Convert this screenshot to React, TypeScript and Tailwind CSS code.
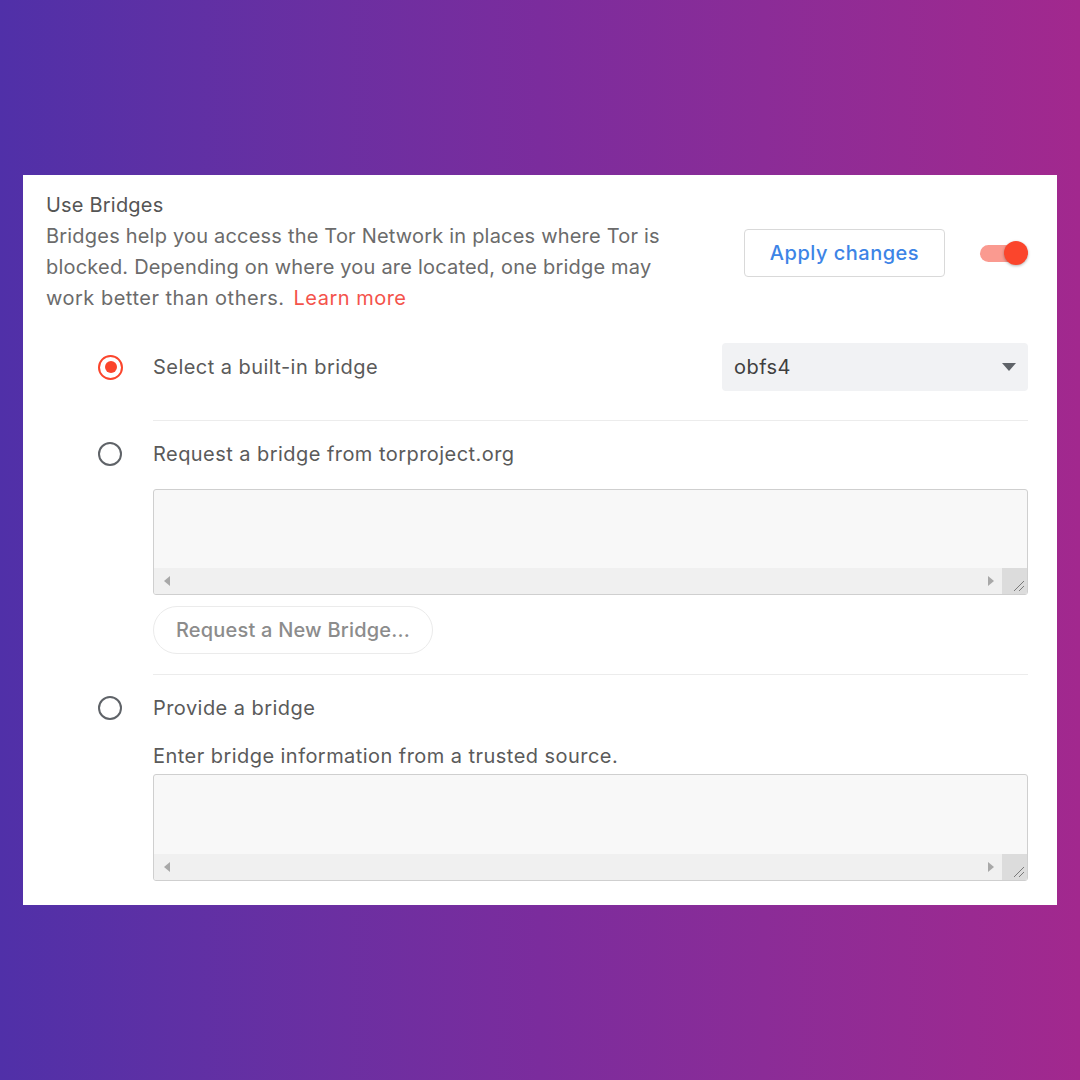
import React from "react";

function Radio({ checked }: { checked?: boolean }) {
  return checked ? (
    <div className="w-[25px] h-[25px] rounded-full border-[2.5px] border-[#fb452c] flex items-center justify-center">
      <div className="w-[12px] h-[12px] rounded-full bg-[#fb452c]" />
    </div>
  ) : (
    <div className="w-[24px] h-[24px] rounded-full border-[2.5px] border-[#5f6368]" />
  );
}

function FakeTextarea({ h }: { h: string }) {
  return (
    <div className={`${h} w-full rounded-[3px] border border-[#cfcfcf] bg-[#f8f8f8] flex flex-col overflow-hidden`}>
      <div className="flex-1" />
      <div className="h-[26px] bg-[#f0f0f0] flex items-center">
        <div className="w-[26px] flex items-center justify-center">
          <svg width="6" height="10" viewBox="0 0 6 10">
            <path d="M6 0 L0 5 L6 10 Z" fill="#a8a8a8" />
          </svg>
        </div>
        <div className="flex-1" />
        <div className="w-[22px] flex items-center justify-center">
          <svg width="6" height="10" viewBox="0 0 6 10">
            <path d="M0 0 L6 5 L0 10 Z" fill="#a8a8a8" />
          </svg>
        </div>
        <div className="w-[25px] h-full bg-[#dcdcdc] flex items-end justify-end">
          <svg width="14" height="14" viewBox="0 0 14 14" className="mb-[2px] mr-[2px]">
            <path d="M13 3 L3 13 M13 8 L8 13" stroke="#7a7a7a" strokeWidth="1" />
          </svg>
        </div>
      </div>
    </div>
  );
}

export default function App() {
  return (
    <div
      className="w-full h-[1080px] bg-gradient-to-r from-[#5030a8] via-[#7b2c9d] to-[#a2288e] flex justify-center pt-[175px]"
      style={{ fontFamily: "Inter, 'Noto Sans', sans-serif" }}
    >
      <div className="w-[1034px] h-[730px] bg-white pl-[23px] pr-[29px] pt-[15px] pb-[25px] flex flex-col">
        {/* header */}
        <div className="flex items-center justify-between">
          <div className="text-[20px] leading-[31px] whitespace-nowrap tracking-[0.2px]">
            <div className="text-[#555555]">Use Bridges</div>
            <div className="text-[#6b6b6b]">
              Bridges help you access the Tor Network in places where Tor is
              <br />
              blocked. Depending on where you are located, one bridge may
              <br />
              <span className="tracking-[0.5px]">work better than others.</span>
              <span className="ml-[9px] text-[#f4534b] tracking-[0.5px]">Learn more</span>
            </div>
          </div>
          <div className="flex items-center gap-[35px] pt-[2px]">
            <button className="w-[201px] h-[48px] rounded-[4px] border border-[#d9d9d9] bg-white text-[20px] font-medium tracking-[0.5px] text-[#3d84e6]">
              Apply changes
            </button>
            <div className="relative w-[48px] h-[24px] flex items-center">
              <div className="w-[40px] h-[17px] rounded-full bg-[#fa9a90]" />
              <div className="absolute right-0 top-0 w-[24px] h-[24px] rounded-full bg-[#fb452c] shadow-[0_1px_3px_rgba(0,0,0,0.3)]" />
            </div>
          </div>
        </div>

        {/* options */}
        <div className="pl-[52px] mt-[29px] flex flex-col text-[20px] tracking-[0.45px]">
          {/* option 1 */}
          <div className="flex items-start">
            <div className="w-[55px] h-[48px] flex items-center">
              <Radio checked />
            </div>
            <div className="flex-1 border-b border-[#ececec] pb-[29px]">
              <div className="h-[48px] flex items-center justify-between">
                <span className="text-[#5a5a5a]">Select a built-in bridge</span>
                <div className="w-[306px] h-[48px] rounded-[4px] bg-[#f1f2f4] flex items-center justify-between pl-[12px] pr-[12px]">
                  <span className="text-[#3f3f3f]">obfs4</span>
                  <svg width="14" height="8" viewBox="0 0 14 8">
                    <path d="M0 0 L14 0 L7 8 Z" fill="#5f6368" />
                  </svg>
                </div>
              </div>
            </div>
          </div>

          {/* option 2 */}
          <div className="flex items-start pt-[9px]">
            <div className="w-[55px] h-[48px] flex items-center">
              <Radio />
            </div>
            <div className="flex-1 border-b border-[#ececec] pb-[20px] flex flex-col">
              <div className="h-[48px] flex items-center">
                <span className="text-[#5a5a5a]">Request a bridge from torproject.org</span>
              </div>
              <div className="mt-[11px]">
                <FakeTextarea h="h-[106px]" />
              </div>
              <div className="mt-[11px]">
                <button className="w-[280px] h-[48px] rounded-full border border-[#ebebeb] bg-white font-medium tracking-[0.2px] text-[#8c8c8c]">
                  Request a New Bridge...
                </button>
              </div>
            </div>
          </div>

          {/* option 3 */}
          <div className="flex items-start pt-[9px]">
            <div className="w-[55px] h-[48px] flex items-center">
              <Radio />
            </div>
            <div className="flex-1 flex flex-col">
              <div className="h-[48px] flex items-center">
                <span className="text-[#5a5a5a]">Provide a bridge</span>
              </div>
              <div className="mt-[9px] leading-[31px] text-[#5a5a5a]">
                Enter bridge information from a trusted source.
              </div>
              <div className="mt-[2px]">
                <FakeTextarea h="h-[107px]" />
              </div>
            </div>
          </div>
        </div>
      </div>
    </div>
  );
}
